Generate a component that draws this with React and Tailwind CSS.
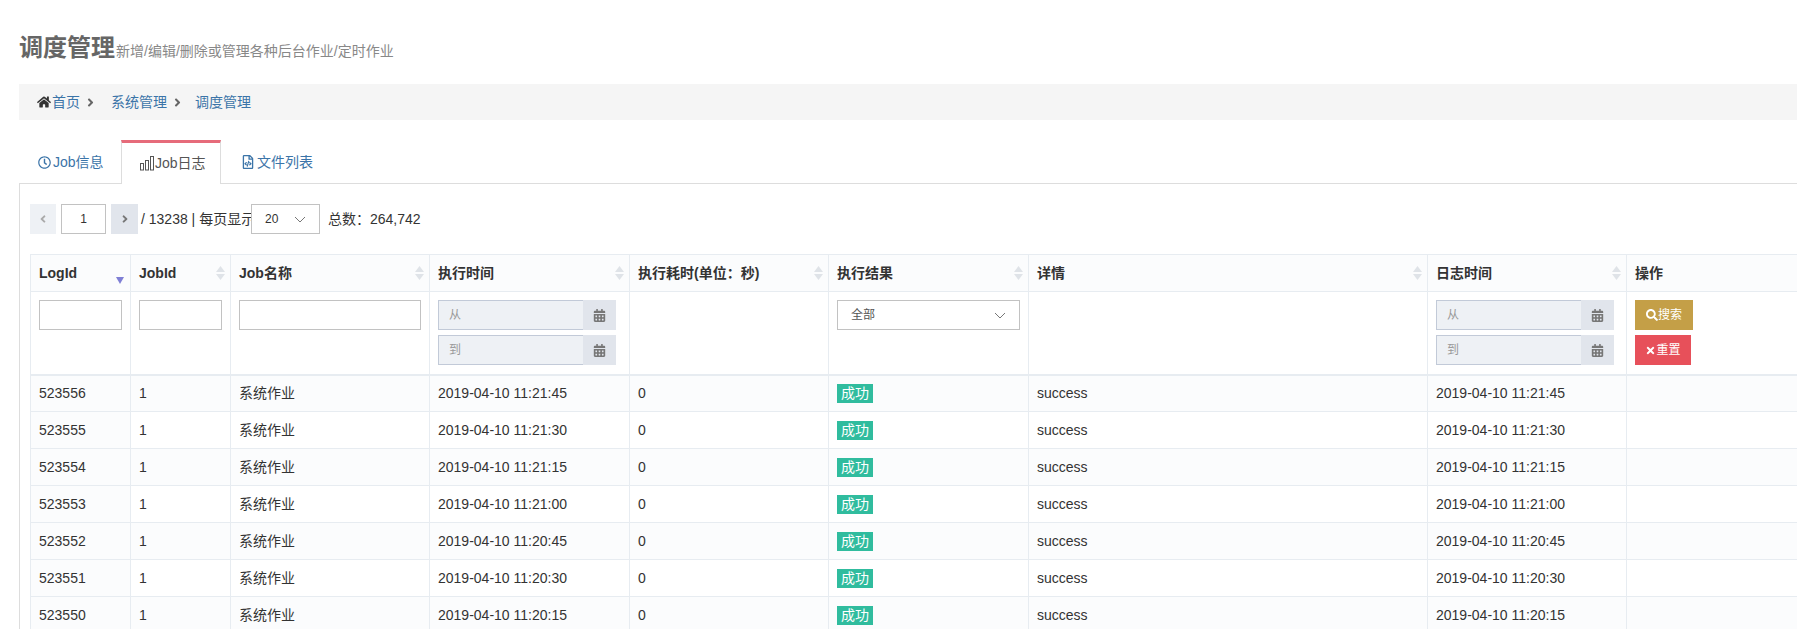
import { FaHome, FaRegClock, FaRegFileCode, FaCalendarAlt, FaSearch, FaTimes, FaAngleLeft, FaAngleRight } from 'react-icons/fa';

const FONT = 'font-["Liberation_Sans","Noto_Sans_CJK_SC",sans-serif]';

const COLUMNS = [
  { name: 'LogId', width: 'w-[100px]', sort: 'desc' },
  { name: 'JobId', width: 'w-[100px]', sort: 'both' },
  { name: 'Job名称', width: 'w-[199px]', sort: 'both' },
  { name: '执行时间', width: 'w-[200px]', sort: 'both' },
  { name: '执行耗时(单位：秒)', width: 'w-[199px]', sort: 'both' },
  { name: '执行结果', width: 'w-[200px]', sort: 'both' },
  { name: '详情', width: 'w-[399px]', sort: 'both' },
  { name: '日志时间', width: 'w-[199px]', sort: 'both' },
  { name: '操作', width: 'w-[200px]' },
];

const ROWS = [
  ['523556', '2019-04-10 11:21:45'],
  ['523555', '2019-04-10 11:21:30'],
  ['523554', '2019-04-10 11:21:15'],
  ['523553', '2019-04-10 11:21:00'],
  ['523552', '2019-04-10 11:20:45'],
  ['523551', '2019-04-10 11:20:30'],
  ['523550', '2019-04-10 11:20:15'],
];

function SortIcon({ sort }) {
  if (!sort) return null;
  if (sort === 'desc') {
    return (
      <svg width="8" height="16" viewBox="0 0 8 16" className="mr-[-2px] shrink-0 translate-y-[3px]">
        <path d="M0 9h8l-4 7z" fill="#7f7fd5" />
      </svg>
    );
  }
  return (
    <svg width="9" height="16" viewBox="0 0 9 16" className="mr-[-3px] shrink-0">
      <path d="M4.5 1L9 7H0z" fill="#dfe3e8" />
      <path d="M0 9h9l-4.5 6z" fill="#dfe3e8" />
    </svg>
  );
}

function Chevron({ className }) {
  return (
    <svg width="12" height="7" viewBox="0 0 12 7" className={className}>
      <path d="M1 1l5 5 5-5" fill="none" stroke="#777" strokeWidth="1" />
    </svg>
  );
}

function BarsIcon() {
  return (
    <svg width="15" height="15" viewBox="0 0 15 15" className="shrink-0">
      <g fill="none" stroke="#555" strokeWidth="1">
        <rect x="0.5" y="7.5" width="3" height="6.5" />
        <rect x="5.5" y="4.5" width="3" height="9.5" />
        <rect x="10.5" y="0.5" width="3" height="13.5" />
      </g>
    </svg>
  );
}

function DateInput({ placeholder, className = '' }) {
  return (
    <div className={`flex h-[30px] w-[178px] ${className}`}>
      <div className="flex-1 border border-r-0 border-[#c2cad8] bg-[#eef1f5] pl-[10px] text-[12px] leading-[28px] text-[#999]">
        {placeholder}
      </div>
      <div className="flex w-[33px] items-center justify-center bg-[#e1e5ec]">
        <FaCalendarAlt className="text-[13px] text-[#777]" />
      </div>
    </div>
  );
}

function TextFilter({ width }) {
  return <div className={`h-[30px] border border-[#c2c2c2] bg-white ${width}`} />;
}

export default function App() {
  return (
    <div className={`${FONT} h-[629px] w-[1797px] overflow-hidden bg-white pl-[19px] pt-[32px] text-[14px] text-[#333]`}>
      {/* Title */}
      <div className="flex h-[32px] items-baseline">
        <h1 className="text-[24px] font-bold leading-[32px] text-[#666]">调度管理</h1>
        <span className="ml-[1px] text-[14px] text-[#888]">新增/编辑/删除或管理各种后台作业/定时作业</span>
      </div>

      {/* Breadcrumb */}
      <div className="mt-[20px] flex h-[36px] items-center bg-[#f5f5f5] pl-[18px] text-[#3b74a8]">
        <FaHome className="mr-[1px] text-[14px] text-[#333]" />
        <span>首页</span>
        <FaAngleRight className="ml-[4px] text-[13px] text-[#666]" />
        <span className="ml-[14px]">系统管理</span>
        <FaAngleRight className="ml-[4px] text-[13px] text-[#666]" />
        <span className="ml-[11px]">调度管理</span>
      </div>

      {/* Tabs */}
      <div className="relative z-10 mt-[20px] flex h-[44px]">
        <div className="flex w-[102px] items-center pl-[19px] text-[#3b74a8]">
          <FaRegClock className="mr-[2px] text-[13px]" />
          Job信息
        </div>
        <div className="flex w-[100px] items-center border-x border-t-[3px] border-x-[#ddd] border-t-[#e66b7a] bg-white pl-[18px] text-[#555]">
          <BarsIcon />
          Job日志
        </div>
        <div className="flex items-center pl-[20px] text-[#3b74a8]">
          <FaRegFileCode className="mr-[2px] text-[14px]" />
          文件列表
        </div>
      </div>

      {/* Panel */}
      <div className="-mt-px border-l border-t border-[#ddd] pl-[10px] pt-[20px]">
        <div className="flex h-[30px] items-center text-[13px]">
          <div className="flex h-[30px] w-[26px] items-center justify-center bg-[#eef1f5] text-[#aaa]">
            <FaAngleLeft className="text-[12px]" />
          </div>
          <div className="ml-[5px] flex h-[30px] w-[45px] items-center justify-center border border-[#c2c2c2] text-[12px]">1</div>
          <div className="ml-[5px] flex h-[30px] w-[27px] items-center justify-center bg-[#e1e5ec] text-[#777]">
            <FaAngleRight className="text-[12px]" />
          </div>
          <span className="ml-[3px] w-[110px] whitespace-nowrap text-[14px]">/ 13238 | 每页显示</span>
          <div className="flex h-[30px] w-[69px] items-center justify-between border border-[#c2c2c2] bg-white pl-[13px] pr-[13px] text-[12px]">
            20
            <Chevron />
          </div>
          <span className="ml-[8px] text-[14px]">总数：264,742</span>
        </div>

        <table className="mt-[20px] w-[1796px] table-fixed border-collapse border-t border-l border-[#e7ecf1]">
          <thead>
            <tr className="h-[37px] bg-[#fbfcfd]">
              {COLUMNS.map(col => (
                <th key={col.name} className={`${col.width} border border-[#e7ecf1] px-[8px] text-left font-bold`}>
                  <div className="flex items-center justify-between whitespace-nowrap">
                    {col.name}
                    <SortIcon sort={col.sort} />
                  </div>
                </th>
              ))}
            </tr>
            <tr className="h-[83px] border-b-2 border-[#e7ecf1] align-top">
              <td className="border-x border-[#e7ecf1] px-[8px] pt-[8px]"><TextFilter width="w-[83px]" /></td>
              <td className="border-x border-[#e7ecf1] px-[8px] pt-[8px]"><TextFilter width="w-[83px]" /></td>
              <td className="border-x border-[#e7ecf1] px-[8px] pt-[8px]"><TextFilter width="w-[182px]" /></td>
              <td className="border-x border-[#e7ecf1] px-[8px] pt-[8px]">
                <DateInput placeholder="从" />
                <DateInput placeholder="到" className="mt-[5px]" />
              </td>
              <td className="border-x border-[#e7ecf1]" />
              <td className="border-x border-[#e7ecf1] px-[8px] pt-[8px]">
                <div className="flex h-[30px] w-[183px] items-center justify-between border border-[#c2c2c2] bg-white pl-[13px] pr-[13px] text-[12px] text-[#555]">
                  全部
                  <Chevron />
                </div>
              </td>
              <td className="border-x border-[#e7ecf1]" />
              <td className="border-x border-[#e7ecf1] px-[8px] pt-[8px]">
                <DateInput placeholder="从" />
                <DateInput placeholder="到" className="mt-[5px]" />
              </td>
              <td className="border-x border-[#e7ecf1] px-[8px] pt-[8px]">
                <button className="flex h-[30px] w-[58px] items-center justify-center bg-[#c49f47] text-[12px] text-white">
                  <FaSearch className="text-[12px]" />
                  搜索
                </button>
                <button className="mt-[5px] flex h-[30px] w-[56px] items-center justify-center bg-[#e7505a] text-[12px] text-white">
                  <FaTimes className="text-[11px]" />
                  重置
                </button>
              </td>
            </tr>
          </thead>
          <tbody>
            {ROWS.map(([id, time], idx) => (
              <tr key={id} className={`h-[37px] ${idx % 2 === 0 ? 'bg-[#fbfcfd]' : 'bg-white'}`}>
                <td className="border border-[#e7ecf1] bg-[#fbfcfd] px-[8px]">{id}</td>
                <td className="border border-[#e7ecf1] px-[8px]">1</td>
                <td className="border border-[#e7ecf1] px-[8px]">系统作业</td>
                <td className="border border-[#e7ecf1] px-[8px]">{time}</td>
                <td className="border border-[#e7ecf1] px-[8px]">0</td>
                <td className="border border-[#e7ecf1] px-[8px]">
                  <span className="inline-block h-[19px] w-[36px] bg-[#30bc9e] text-center text-[14px] leading-[19px] text-white">成功</span>
                </td>
                <td className="border border-[#e7ecf1] px-[8px]">success</td>
                <td className="border border-[#e7ecf1] px-[8px]">{time}</td>
                <td className="border border-[#e7ecf1] px-[8px]" />
              </tr>
            ))}
          </tbody>
        </table>
      </div>
    </div>
  );
}
